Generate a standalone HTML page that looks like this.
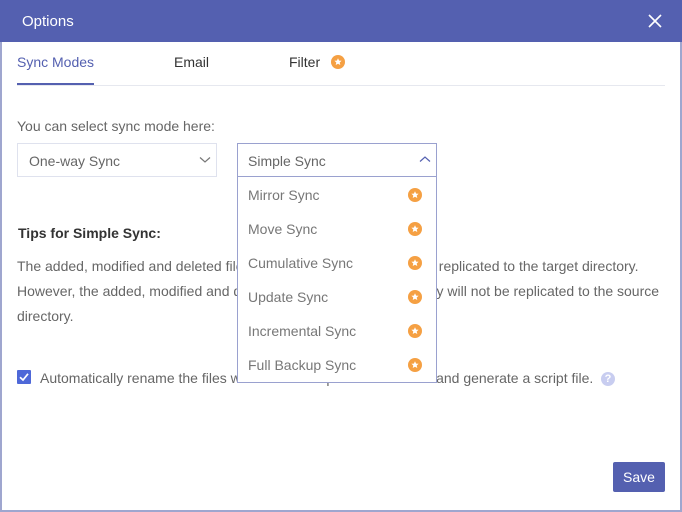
<!DOCTYPE html>
<html><head><meta charset="utf-8"><style>
*{margin:0;padding:0;box-sizing:border-box}
body{width:682px;height:512px;overflow:hidden;background:#fff;font-family:"Liberation Sans",Arial,sans-serif;position:relative}
.frame{position:absolute;left:0;top:0;width:682px;height:512px;border:2px solid #9fa6cf;border-top:none}
.hdr{position:absolute;left:0;top:0;width:682px;height:42px;background:#5460b0;color:#fff;font-size:15px;line-height:44px;padding-left:22px}
.x{position:absolute;right:20px;top:14px}
.a{position:absolute;white-space:nowrap}
.star{display:inline-block;width:14px;height:14px;border-radius:50%;background:#f5a043;position:relative}
.star svg{position:absolute;left:2px;top:2px}
.sel{position:absolute;border:1px solid #dfe2ee;background:#fff}
.t{font-size:14px;color:#666}
.item{position:absolute;left:10px;font-size:14px;color:#777}
</style></head><body>
<div class="frame"></div>
<div class="hdr">Options
<svg class="x" width="14" height="14" viewBox="0 0 14 14"><path d="M1 1L13 13M13 1L1 13" stroke="#fff" stroke-width="1.6"/></svg></div>
<div class="a" style="left:17px;top:54px;font-size:14px;color:#5460b0">Sync Modes</div>
<div class="a" style="left:17px;top:83px;width:77px;height:3px;background:#5460b0"></div>
<div class="a" style="left:17px;top:85px;width:648px;height:1px;background:#e6e8ef"></div>
<div class="a" style="left:174px;top:54px;font-size:14px;color:#333">Email</div>
<div class="a" style="left:289px;top:54px;font-size:14px;color:#333">Filter</div>
<div class="a" style="left:331px;top:55px"><span class="star"><svg width="10" height="10" viewBox="0 0 10 10"><path d="M5 1.2L6.1 3.6 8.6 3.8 6.7 5.5 7.3 8 5 6.7 2.7 8 3.3 5.5 1.4 3.8 3.9 3.6Z" fill="#fff"/></svg></span></div>
<div class="a t" style="left:17px;top:118px">You can select sync mode here:</div>
<div class="sel" style="left:17px;top:143px;width:200px;height:34px"><span class="a t" style="left:11px;top:9px">One-way Sync</span>
<svg class="a" style="right:5px;top:12px" width="12" height="8" viewBox="0 0 12 8"><path d="M1 1.5L6 6 11 1.5" stroke="#777" fill="none" stroke-width="1.2"/></svg></div>
<div class="a" style="left:18px;top:225px;font-size:14px;font-weight:bold;color:#333">Tips for Simple Sync:</div>
<div class="a t" style="left:17px;top:254px;line-height:25px">The added, modified and deleted files in the source directory will be replicated to the target directory.<br>However, the added, modified and deleted files in the target directory will not be replicated to the source<br>directory.</div>
<div class="a" style="left:17px;top:370px;width:14px;height:14px;background:#4e68d8;border-radius:1px"><svg width="14" height="14" viewBox="0 0 14 14" style="position:absolute;left:0;top:0"><path d="M3 7.2L6 10 11 3.8" stroke="#fff" fill="none" stroke-width="1.7"/></svg></div>
<div class="a t" style="left:40px;top:370px">Automatically rename the files which contain special characters and generate a script file.</div>
<div class="a" style="left:601px;top:372px;width:14px;height:14px;border-radius:50%;background:#c8cdf0;color:#fff;font-size:11px;font-weight:bold;text-align:center;line-height:14px">?</div>
<div class="sel" style="left:237px;top:143px;width:200px;height:240px;border-color:#9aa1cf">
<div class="a" style="left:0;top:32px;width:198px;height:1px;background:#9aa1cf"></div>
<span class="a t" style="left:10px;top:9px">Simple Sync</span>
<svg class="a" style="right:5px;top:11px" width="12" height="8" viewBox="0 0 12 8"><path d="M1 6.5L6 2 11 6.5" stroke="#5460b0" fill="none" stroke-width="1.2"/></svg>
<span class="item" style="top:43px">Mirror Sync</span>
<span class="item" style="top:77px">Move Sync</span>
<span class="item" style="top:111px">Cumulative Sync</span>
<span class="item" style="top:145px">Update Sync</span>
<span class="item" style="top:179px">Incremental Sync</span>
<span class="item" style="top:213px">Full Backup Sync</span>
<span class="a" style="left:170px;top:44px"><span class="star"><svg width="10" height="10" viewBox="0 0 10 10"><path d="M5 1.2L6.1 3.6 8.6 3.8 6.7 5.5 7.3 8 5 6.7 2.7 8 3.3 5.5 1.4 3.8 3.9 3.6Z" fill="#fff"/></svg></span></span>
<span class="a" style="left:170px;top:78px"><span class="star"><svg width="10" height="10" viewBox="0 0 10 10"><path d="M5 1.2L6.1 3.6 8.6 3.8 6.7 5.5 7.3 8 5 6.7 2.7 8 3.3 5.5 1.4 3.8 3.9 3.6Z" fill="#fff"/></svg></span></span>
<span class="a" style="left:170px;top:112px"><span class="star"><svg width="10" height="10" viewBox="0 0 10 10"><path d="M5 1.2L6.1 3.6 8.6 3.8 6.7 5.5 7.3 8 5 6.7 2.7 8 3.3 5.5 1.4 3.8 3.9 3.6Z" fill="#fff"/></svg></span></span>
<span class="a" style="left:170px;top:146px"><span class="star"><svg width="10" height="10" viewBox="0 0 10 10"><path d="M5 1.2L6.1 3.6 8.6 3.8 6.7 5.5 7.3 8 5 6.7 2.7 8 3.3 5.5 1.4 3.8 3.9 3.6Z" fill="#fff"/></svg></span></span>
<span class="a" style="left:170px;top:180px"><span class="star"><svg width="10" height="10" viewBox="0 0 10 10"><path d="M5 1.2L6.1 3.6 8.6 3.8 6.7 5.5 7.3 8 5 6.7 2.7 8 3.3 5.5 1.4 3.8 3.9 3.6Z" fill="#fff"/></svg></span></span>
<span class="a" style="left:170px;top:214px"><span class="star"><svg width="10" height="10" viewBox="0 0 10 10"><path d="M5 1.2L6.1 3.6 8.6 3.8 6.7 5.5 7.3 8 5 6.7 2.7 8 3.3 5.5 1.4 3.8 3.9 3.6Z" fill="#fff"/></svg></span></span>
</div>
<div class="a" style="left:613px;top:462px;width:52px;height:30px;background:#5460b0;color:#fff;font-size:14px;text-align:center;line-height:30px;border-radius:2px">Save</div>
</body></html>
